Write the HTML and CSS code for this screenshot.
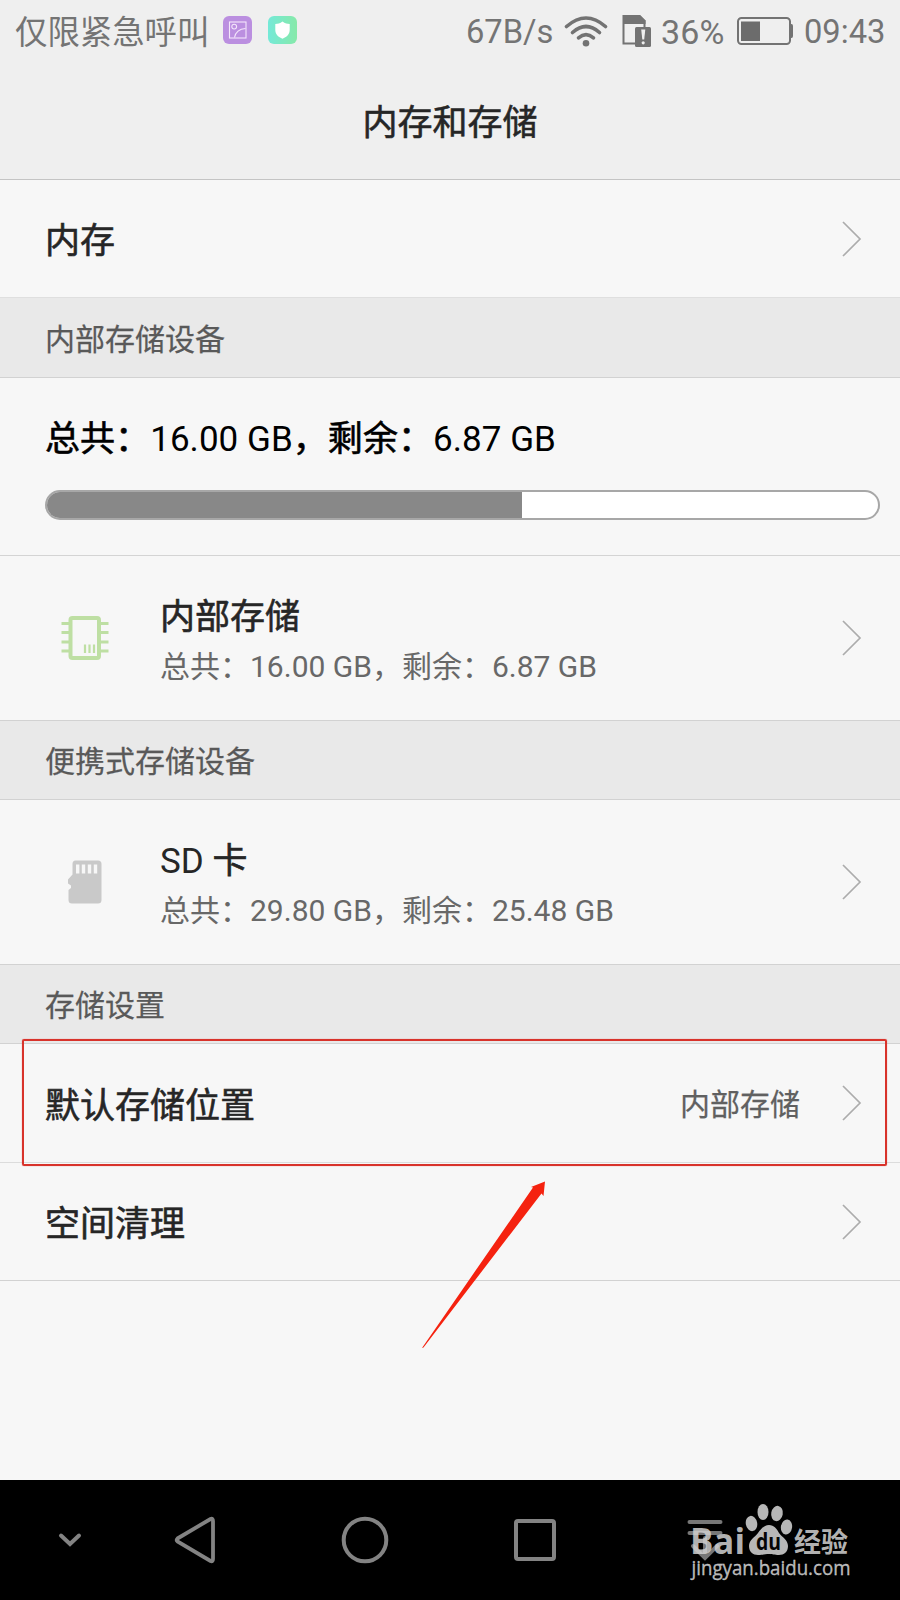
FILE: index.html
```html
<!DOCTYPE html>
<html lang="zh-CN">
<head>
<meta charset="utf-8">
<title>内存和存储</title>
<link rel="stylesheet" href="styles.css">
</head>
<body>
<div class="screen">
  <header class="header">
    <div class="status">
      <div class="status-side">
        <span class="carrier">仅限紧急呼叫</span>
        <svg class="app-icon" width="29" height="28" viewBox="0 0 29 28"><rect width="29" height="28" rx="6" fill="#bb8fe0"/><g fill="none" stroke="#f4e6fb" stroke-width="1.1"><rect x="6.5" y="6" width="16.5" height="16"/><circle cx="11.2" cy="10.6" r="2.4"/><path d="M11.5 21.5C12.5 16.5 16 13 22.5 12.5"/></g></svg>
        <svg class="app-icon shield" width="29" height="28" viewBox="0 0 29 28"><defs><linearGradient id="mint"><stop offset="0" stop-color="#74e9d8"/><stop offset="1" stop-color="#87e9a9"/></linearGradient></defs><rect width="29" height="28" rx="6" fill="url(#mint)"/><path d="M14.5 5.5C17 7.3 19.3 8 21.7 8V14C21.7 18.5 18.500 21 14.500 22.700C10.500 21 7.300 18.500 7.300 14V8C9.700 8 12 7.300 14.500 5.500Z" fill="#fff"/></svg>
      </div>
      <div class="status-side">
        <span class="speed">67B/s</span>
        <svg class="wifi" width="44" height="36" viewBox="564 12 44 36"><g fill="none" stroke="#737373" stroke-width="3.600" stroke-linecap="round"><path d="M566.500 25.500Q586 8.500 605.500 25.500"/><path d="M572.500 31.500Q586 19.500 599.500 31.500"/><path d="M578.500 36.800Q586 30.500 593.500 36.800"/></g><circle cx="586" cy="42.300" r="3.300" fill="#737373"/></svg>
        <svg class="sim" width="30" height="36" viewBox="622 12 30 36"><path d="M623.500 15H639.500L644.500 20V42.500H623.500Z" fill="none" stroke="#737373" stroke-width="2"/><path d="M623 14H640L645.500 19.500V23H623Z" fill="#737373"/><rect x="635" y="26" width="16" height="20" rx="1.500" fill="#737373"/><path d="M641.200 28.500H645.300L644.200 38.500H642.300Z" fill="#efefef"/><circle cx="643.200" cy="41.800" r="1.600" fill="#efefef"/></svg>
        <span class="percent">36%</span>
        <svg class="battery" width="57" height="30" viewBox="736 16 57 30"><rect x="738" y="18" width="52" height="26" rx="3.500" fill="none" stroke="#737373" stroke-width="2"/><rect x="741" y="21.500" width="19" height="19.500" fill="#6c6c6c"/><path d="M790 24H791.500Q793 24 793 26V36Q793 38 791.500 38H790Z" fill="#737373"/></svg>
        <span class="clock">09:43</span>
      </div>
    </div>
    <h1 class="title">内存和存储</h1>
  </header>

  <main class="list">
    <div class="row">
      <span class="label">内存</span>
      <svg class="chevron" width="20" height="36" viewBox="0 0 20 36"><path d="M1 1L18 18L1 35"/></svg>
    </div>
    <h2 class="section first">内部存储设备</h2>
    <div class="capacity">
      <div class="capacity-text">总共：<span class="figure">16.00 GB</span>，剩余：<span class="figure">6.87 GB</span></div>
      <div class="meter"><div class="meter-fill" style="width:57.1%"></div></div>
    </div>
    <div class="row device">
      <svg class="device-icon" width="48" height="44" viewBox="0 0 48 44"><rect x="9.500" y="2" width="28.500" height="40" rx="2" fill="none" stroke="#bedfa3" stroke-width="4"/><path d="M.5 7.500H8M.5 16.500H8M.5 26H8M.5 35H8M40 7.500H47.500M40 16.500H47.500M40 26H47.500M40 35H47.500" stroke="#bedfa3" stroke-width="3"/><path d="M24 28.500V37M28.500 28.500V37M33 28.500V37" stroke="#bedfa3" stroke-width="2.200"/></svg>
      <div class="device-text">
        <span class="device-name">内部存储</span>
        <span class="device-info">总共：16.00 GB，剩余：6.87 GB</span>
      </div>
      <svg class="chevron" width="20" height="36" viewBox="0 0 20 36"><path d="M1 1L18 18L1 35"/></svg>
    </div>
    <h2 class="section">便携式存储设备</h2>
    <div class="row device">
      <svg class="device-icon" width="48" height="44" viewBox="0 0 48 44"><path d="M14.500 .5H37Q40.500 .5 40.500 4V40Q40.500 43.500 37 43.500H11Q7.500 43.500 7.500 40V30L10 28V25.500L7 23.500V19.500L11.500 14.500V4Q11.500 .5 14.500 .5Z" fill="#c9c9c9"/><path d="M16.700 4.500V13.500M22.500 4.500V13.500M28.500 4.500V13.500M34.500 4.500V13.500" stroke="#f7f7f7" stroke-width="3.400"/></svg>
      <div class="device-text">
        <span class="device-name"><span class="figure">SD</span> 卡</span>
        <span class="device-info">总共：29.80 GB，剩余：25.48 GB</span>
      </div>
      <svg class="chevron" width="20" height="36" viewBox="0 0 20 36"><path d="M1 1L18 18L1 35"/></svg>
    </div>
    <h2 class="section">存储设置</h2>
    <div class="row default-row">
      <span class="label">默认存储位置</span>
      <span class="value">内部存储</span>
      <svg class="chevron" width="20" height="36" viewBox="0 0 20 36"><path d="M1 1L18 18L1 35"/></svg>
      <div class="highlight"></div>
    </div>
    <div class="row last">
      <span class="label">空间清理</span>
      <svg class="chevron" width="20" height="36" viewBox="0 0 20 36"><path d="M1 1L18 18L1 35"/></svg>
    </div>
    <svg class="arrow" width="126" height="170" viewBox="420 1180 126 170"><path d="M422 1348L533 1187.500L531 1187L545 1181.500L543.500 1196L541.500 1193.500L423.500 1347.500Z" fill="#f5220f"/></svg>
  </main>

  <nav class="nav">
    <svg width="24" height="16" viewBox="0 0 24 16"><path d="M3 3.500L12 12L21 3.500" fill="none" stroke="#838383" stroke-width="4" stroke-linecap="round"/></svg>
    <svg width="42" height="48" viewBox="174 1516 42 48"><path d="M177.500 1538.500L210.500 1519Q213 1518 213 1521V1559Q213 1562 210.500 1561L177.500 1541.500Q176 1540 177.500 1538.500Z" fill="none" stroke="#838383" stroke-width="3.800"/></svg>
    <svg width="48" height="48" viewBox="0 0 48 48"><circle cx="24" cy="24" r="21.300" fill="none" stroke="#838383" stroke-width="4"/></svg>
    <svg width="44" height="44" viewBox="0 0 44 44"><rect x="3" y="3" width="38" height="38" rx="2" fill="none" stroke="#838383" stroke-width="4"/></svg>
    <svg width="36" height="44" viewBox="687 1518 36 44"><path d="M689.500 1522H720.500M689.500 1533H720.500" stroke="#777" stroke-width="4" stroke-linecap="round"/><path d="M705 1538V1555M693 1546L705 1558L717 1546" fill="none" stroke="#777" stroke-width="4" stroke-linecap="round"/></svg>
    <svg class="watermark" width="170" height="96" viewBox="686 1500 170 96">
      <g fill="#d2d2d2" fill-opacity=".87">
        <text class="wm-brand" x="690" y="1553.500" textLength="55" lengthAdjust="spacingAndGlyphs">Bai</text>
        <ellipse cx="751.500" cy="1523.500" rx="5.700" ry="7.700" transform="rotate(-10 751.500 1523.500)"/>
        <ellipse cx="763" cy="1512" rx="5.500" ry="8"/>
        <ellipse cx="777" cy="1513.500" rx="5.800" ry="7.700" transform="rotate(10 777 1513.500)"/>
        <ellipse cx="786.500" cy="1527" rx="5.600" ry="7.600" transform="rotate(8 786.500 1527)"/>
        <path d="M769 1525C774 1525 777 1529 779 1533C782 1537 788 1540 788 1546C788 1552 784 1555 779 1555C774 1555 773 1554 769 1554C765 1554 763 1555 758 1555C753 1555 749 1552 749 1546C749 1540 755 1537 758 1533C761 1529 764 1525 769 1525Z"/>
        <text class="wm-cjk" x="794" y="1551.500" textLength="54" lengthAdjust="spacingAndGlyphs">经验</text>
        <text class="wm-url" x="691.500" y="1575" textLength="159" lengthAdjust="spacingAndGlyphs">jingyan.baidu.com</text>
      </g>
      <text class="wm-du" x="756" y="1549.500" textLength="25" lengthAdjust="spacingAndGlyphs">du</text>
    </svg>
  </nav>
</div>
</body>
</html>
```
FILE: styles.css
```css
* { box-sizing: border-box; }
body { margin: 0; background: #f7f7f7; }
svg { display: block; flex: none; }
h1, h2 { margin: 0; font-weight: 400; }

.screen {
  width: 900px;
  height: 1600px;
  display: flex;
  flex-direction: column;
  font-family: Roboto, "Noto Sans CJK SC", sans-serif;
  color: #262626;
  white-space: nowrap;
}

.header {
  height: 180px;
  background: #efefef;
  border-bottom: 1px solid #c4c4c4;
}
.status {
  height: 62px;
  padding: 0 16px 0 15px;
  display: flex;
  justify-content: space-between;
  font-size: 32px;
  line-height: 60px;
  color: #747474;
}
.status-side { display: flex; align-items: center; }
.carrier { width: 208px; font-size: 32.400px; padding-top: 3px; }
.app-icon { margin-bottom: 2px; }
.shield { margin-left: 16px; }
.speed { width: 98px; padding-top: 2px; font-size: 32.700px; }
.wifi { margin-right: 14px; }
.sim { margin-right: 9px; }
.percent { width: 75px; padding-top: 2px; font-size: 34px; letter-spacing: .2px; }
.battery { margin-right: 11px; }
.clock { width: 80px; padding-top: 2px; font-size: 32.700px; }

.title {
  padding-top: 33.500px;
  font-size: 35px;
  line-height: 56px;
  text-align: center;
}
/* Weight between regular and bold for primary Chinese labels */
.title, .label, .device-name, .capacity-text { -webkit-text-stroke: .6px currentColor; }
.section, .value { -webkit-text-stroke: .25px currentColor; }
.figure { -webkit-text-stroke: 0; }

.list { flex: 1; position: relative; }
.row {
  position: relative;
  height: 119px;
  padding: 0 38px 0 45px;
  display: flex;
  align-items: center;
  border-bottom: 1px solid #dcdcdc;
}
.row:first-child { height: 117px; border-bottom: 0; }
.label { flex: 1; padding-top: 7px; font-size: 35px; line-height: 50px; }
.value { margin-right: 42px; padding-top: 4px; font-size: 30px; line-height: 50px; color: #606060; }
.chevron { fill: none; stroke: #acacac; stroke-width: 1.700px; }

.section {
  height: 79px;
  padding: 4px 45px 0;
  border-bottom: 1px solid #d2d2d2;
  background: #e9e9e9;
  font-size: 30px;
  line-height: 74px;
  color: #595959;
}
.section.first { height: 81px; border-top: 1px solid #dfdfdf; line-height: 75px; }

.capacity {
  height: 178px;
  padding: 37px 20px 0 45px;
  border-bottom: 1px solid #d4d4d4;
}
.capacity-text { font-size: 35px; line-height: 50px; color: #000; letter-spacing: .05px; }
.meter {
  height: 30px;
  margin-top: 25px;
  border: 2px solid #a7a7a7;
  border-radius: 15px;
  background: #fff;
  overflow: hidden;
}
.meter-fill { height: 100%; background: #888; }

.device { height: 165px; border-bottom-color: #d2d2d2; padding-left: 61px; }
.device-text {
  flex: 1;
  padding-top: 4px;
  margin-left: 51px;
  display: flex;
  flex-direction: column;
}
.device-name { font-size: 35px; line-height: 53px; }
.device-info { font-size: 30px; line-height: 46px; color: #686868; }

.last { height: 118px; border-bottom-color: #d2d2d2; }
.highlight {
  position: absolute;
  left: 22px;
  top: -5px;
  width: 865px;
  height: 127px;
  border: 2px solid #d8332b;
  border-radius: 2px;
  box-shadow: 0 0 1px #e8564f;
  z-index: 1;
}
.arrow { position: absolute; left: 420px; top: 1000px; }

.nav {
  position: relative;
  height: 120px;
  padding-left: 30px;
  display: grid;
  grid-template-columns: 80px repeat(4, 170px);
  align-items: center;
  justify-items: center;
  background: #000;
}
.watermark { position: absolute; left: 686px; top: 20px; }
.wm-brand { font: 700 35px "Open Sans", sans-serif; }
.wm-cjk { font: 700 27px "Noto Sans CJK SC", sans-serif; }
.wm-url { font: 400 20px "Open Sans", sans-serif; stroke: #d2d2d2; stroke-width: .3px; }
.wm-du { font: 700 24px "Open Sans", sans-serif; fill: #050505; }
```
